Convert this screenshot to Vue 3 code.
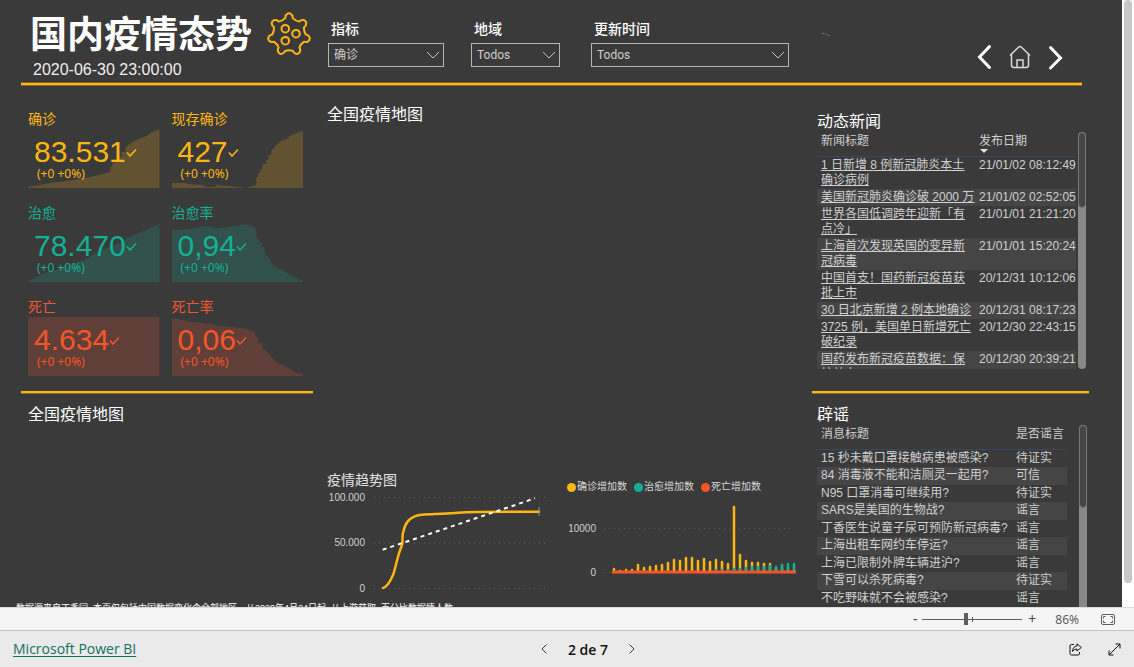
<script setup>
import { ref } from 'vue'

const filters = [
  { id: 'metric', label: '指标', value: '确诊' },
  { id: 'region', label: '地域', value: 'Todos' },
  { id: 'updated', label: '更新时间', value: 'Todos' },
]

const kpis = [
  { label: '确诊', value: '83.531', tone: 'gold', area: 'M0 59V58L12 56L22 54L38 52L50 50L62 48L74 45L82 43V38H84V34H87V31H90V28H93V23H97V19L102 14L108 11L116 8L124 3L131 0V59Z' },
  { label: '现存确诊', value: '427', tone: 'gold', area: 'M0 59V54L14 54L16 55L30 56L34 58L43 58L44 56L56 57L66 58L74 59L84 56V48H86V44H88V40H90V35H94V31H96V26H99V22L104 16L108 12L114 10L119 6L124 4L131 1V59Z' },
  { label: '治愈', value: '78.470', tone: 'teal', area: 'M0 59V58L8 54L14 51L30 46L44 41L58 36L66 31L76 26L90 21L98 15L108 11L118 7L124 4L131 1V59Z' },
  { label: '治愈率', value: '0,94', tone: 'teal', area: 'M0 59V7L18 6L24 5L36 3L44 5L56 4L64 3L74 1L82 4L84 7V16H87V20H90V24H92V29L97 35L99 40L105 45L112 48L118 52L124 55L131 58V59Z' },
  { label: '死亡', value: '4.634', tone: 'red', area: 'M0 59V0H131V59Z' },
  { label: '死亡率', value: '0,06', tone: 'red', area: 'M0 59V1L10 3L20 5L40 7L44 9L62 10L74 12L83 15V20H86V26H90V31L94 34L100 41L106 46L112 49L118 52L124 56L131 58V59Z' },
]

const news = [
  { lines: ['1 日新增 8 例新冠肺炎本土', '确诊病例'], date: '21/01/02 08:12:49' },
  { lines: ['美国新冠肺炎确诊破 2000 万'], date: '21/01/02 02:52:05' },
  { lines: ['世界各国低调跨年迎新「有', '点冷」'], date: '21/01/01 21:21:20' },
  { lines: ['上海首次发现英国的变异新', '冠病毒'], date: '21/01/01 15:20:24' },
  { lines: ['中国首支！国药新冠疫苗获', '批上市'], date: '20/12/31 10:12:06' },
  { lines: ['30 日北京新增 2 例本地确诊'], date: '20/12/31 08:17:23' },
  { lines: ['3725 例，美国单日新增死亡', '破纪录'], date: '20/12/30 22:43:15' },
  { lines: ['国药发布新冠疫苗数据：保', '护效力 79%'], date: '20/12/30 20:39:21' },
]

const rumors = [
  ['15 秒未戴口罩接触病患被感染?', '待证实'],
  ['84 消毒液不能和洁厕灵一起用?', '可信'],
  ['N95 口罩消毒可继续用?', '待证实'],
  ['SARS是美国的生物战?', '谣言'],
  ['丁香医生说童子尿可预防新冠病毒?', '谣言'],
  ['上海出租车网约车停运?', '谣言'],
  ['上海已限制外牌车辆进沪?', '谣言'],
  ['下雪可以杀死病毒?', '待证实'],
  ['不吃野味就不会被感染?', '谣言'],
]

const legend = [
  { name: '确诊增加数', tone: 'gold' },
  { name: '治愈增加数', tone: 'teal' },
  { name: '死亡增加数', tone: 'red' },
]

// Bar heights in chart units, one entry per day
const confirmed = [4, 2, 3, 3, 8, 5, 6, 7, 8, 10, 13, 12, 15, 15, 12, 14, 11, 13, 11, 9, 66, 18, 12, 10, 10, 9, 9, 5, 5, 4, 3]
const cured = [0, 0, 0, 0, 0, 0, 0, 0, 0, 0, 0, 0, 0, 0, 0, 0, 1, 3, 3, 3, 4, 4, 5, 6, 6, 6, 7, 6, 8, 9, 9]
const barX = (i) => 49 + i * 6

// Outline with seven rounded knobs around the centre
function virusOutline() {
  const at = (deg, r) => {
    const a = (deg * Math.PI) / 180
    return `${(22 + r * Math.cos(a)).toFixed(2)} ${(22.5 + r * Math.sin(a)).toFixed(2)}`
  }
  const step = 360 / 7
  const half = 12.5
  let d = `M${at(-90 - half, 16.8)}`
  for (let k = 0; k < 7; k++) {
    const a = -90 + k * step
    d += `A3.9 3.9 0 0 1 ${at(a - 7, 20.2)}`
    d += `A3.2 3.2 0 0 1 ${at(a + 7, 20.2)}`
    d += `A3.9 3.9 0 0 1 ${at(a + half, 16.8)}`
    d += `Q${at(a + step / 2, 15)} ${at(a + step - half, 16.8)}`
  }
  return d + 'Z'
}
const virusPath = virusOutline()
const zoom = ref(43)
</script>

<template>
  <div class="app">
    <div class="viewport">
      <main class="report">
        <header class="header">
          <div class="brand">
            <div>
              <h1>国内疫情态势</h1>
              <time>2020-06-30 23:00:00</time>
            </div>
            <svg class="virus" viewBox="0 0 44 45" aria-hidden="true">
              <path :d="virusPath" />
              <circle cx="18.3" cy="16.7" r="3.8" />
              <circle cx="29" cy="21.7" r="3.8" />
              <circle cx="18.3" cy="28.7" r="3.8" />
            </svg>
          </div>
          <div v-for="f in filters" :key="f.id" class="filter" :class="f.id">
            <label :for="f.id">{{ f.label }}</label>
            <div class="select">
              <select :id="f.id"><option>{{ f.value }}</option></select>
              <svg viewBox="0 0 14 8" aria-hidden="true"><path d="M1 1l6 6 6-6" /></svg>
            </div>
          </div>
          <svg class="specks" viewBox="0 0 10 6" aria-hidden="true">
            <path d="M1 1.500h2M4 2h2M6.500 3.500h2" />
          </svg>
          <nav class="page-nav">
            <button type="button" aria-label="上一页">
              <svg class="arrow" viewBox="0 0 14 24"><path d="M12.500 1.500L2.500 12l10 10.500" /></svg>
            </button>
            <button type="button" aria-label="主页">
              <svg class="home" viewBox="0 0 22 24">
                <path d="M1 10.500L9.500 2.200q1.500-1.400 3 0L21 10.500M2.500 9.500V20q0 2.500 2.500 2.500h12q2.500 0 2.500-2.500V9.500M8 22.500V15h6v7.500" />
              </svg>
            </button>
            <button type="button" aria-label="下一页">
              <svg class="arrow" viewBox="0 0 14 24"><path d="M1.500 2.500L11.500 13 1.500 23" /></svg>
            </button>
          </nav>
        </header>
        <div class="rule top"></div>

        <div class="body">
          <div class="overview">
            <div class="columns">
              <section class="left">
                <div class="kpis">
                  <article v-for="k in kpis" :key="k.label" class="kpi" :class="k.tone">
                    <h3>{{ k.label }}</h3>
                    <div class="card">
                      <svg class="area" viewBox="0 0 131 59" preserveAspectRatio="none" aria-hidden="true">
                        <path :d="k.area" />
                      </svg>
                      <div class="figures">
                        <div class="value">
                          {{ k.value }}<svg viewBox="0 0 11 9" aria-hidden="true"><path d="M1 4.500L4 8l6-6.500" /></svg>
                        </div>
                        <div class="delta">(+0 +0%)</div>
                      </div>
                    </div>
                  </article>
                </div>
                <div class="rule"></div>
                <h2 class="map-title">全国疫情地图</h2>
              </section>

              <section class="center">
                <h2>全国疫情地图</h2>
                <div class="map"></div>
                <div class="charts">
                  <figure>
                    <figcaption>疫情趋势图</figcaption>
                    <svg class="chart" viewBox="0 0 223 106">
                      <g class="grid"><path d="M47 6.500H221M47 52H221M47 97.500H221" /></g>
                      <g class="axis">
                        <text x="38" y="10">100.000</text>
                        <text x="38" y="55">50.000</text>
                        <text x="38" y="101">0</text>
                      </g>
                      <path class="curve" d="M56 97C60 96 63 91 66 84C69 76 70 66 75 54C76 50 75 45 76 42C77 37 79 32 82 29C86 25 90 24 95 23.700C108 23 118 23 128 22C138 21 140 21 150 21L212 20.700" />
                      <path class="marker" d="M212 16v9" />
                      <path class="dash" d="M55.700 58.700L208 7.300" />
                    </svg>
                  </figure>
                  <figure class="bars">
                    <ul class="legend">
                      <li v-for="l in legend" :key="l.name" :class="l.tone"><i></i>{{ l.name }}</li>
                    </ul>
                    <svg class="chart" viewBox="0 0 235 80">
                      <g class="grid"><path d="M39 28.500H228M39 72.500H228" /></g>
                      <g class="axis">
                        <text x="31" y="32">10000</text>
                        <text x="31" y="76">0</text>
                      </g>
                      <g class="bar gold">
                        <path v-for="(h, i) in confirmed" :key="i" :d="`M${barX(i)} 72V${72 - h + 1}`" />
                      </g>
                      <g class="bar teal">
                        <path v-for="(h, i) in cured.slice(16)" :key="i" :d="`M${barX(i + 16)} 72V${72 - h + 1}`" />
                      </g>
                      <path class="baseline" d="M47 72H231" />
                    </svg>
                  </figure>
                </div>
              </section>
            </div>
            <p class="note">数据源来自丁香园, 本页仅包括中国数据变化含全部地区。从2020年4月24日起, 从上游获取, 百分比数据情人数</p>
          </div>

          <aside class="side">
            <section class="news">
              <h2>动态新闻</h2>
              <div class="scroller">
                <table>
                  <thead>
                    <tr><th>新闻标题</th><th class="date sorted">发布日期</th></tr>
                  </thead>
                  <tbody>
                    <tr v-for="n in news" :key="n.date">
                      <td><a href="#"><span v-for="t in n.lines" :key="t">{{ t }}</span></a></td>
                      <td class="date">{{ n.date }}</td>
                    </tr>
                  </tbody>
                </table>
                <div class="bar-track"><div class="bar-thumb"></div></div>
              </div>
            </section>
            <div class="rule"></div>
            <section class="rumors">
              <h2>辟谣</h2>
              <div class="scroller">
                <table>
                  <thead>
                    <tr><th>消息标题</th><th class="verdict">是否谣言</th></tr>
                  </thead>
                  <tbody>
                    <tr v-for="r in rumors" :key="r[0]">
                      <td>{{ r[0] }}</td>
                      <td>{{ r[1] }}</td>
                    </tr>
                  </tbody>
                </table>
                <div class="bar-track"><div class="bar-thumb"></div></div>
              </div>
            </section>
          </aside>
        </div>
      </main>
      <div class="page-scroll"><div></div></div>
    </div>

    <div class="zoom-bar">
      <button type="button" class="step" aria-label="Reducir">-</button>
      <input v-model="zoom" type="range" min="0" max="100" aria-label="Zoom" />
      <button type="button" class="step" aria-label="Ampliar">+</button>
      <span class="percent">86%</span>
      <button type="button" class="fit" aria-label="Ajustar a la página">
        <svg viewBox="0 0 14 11">
          <rect x="0.500" y="0.500" width="13" height="10" rx="1.500" />
          <path d="M2.500 4.500v-2h2M9.500 2.500h2v2M11.500 6.500v2h-2M4.500 8.500h-2v-2" />
        </svg>
      </button>
    </div>

    <footer class="footer">
      <a href="#">Microsoft Power BI</a>
      <div class="pager">
        <button type="button" aria-label="Página anterior"><svg viewBox="0 0 6 10"><path d="M5.500 0.500L1 5l4.500 4.500" /></svg></button>
        <span>2 de 7</span>
        <button type="button" aria-label="Página siguiente"><svg viewBox="0 0 6 10"><path d="M0.500 0.500L5 5 0.500 9.500" /></svg></button>
      </div>
      <div class="actions">
        <button type="button" aria-label="Compartir">
          <svg viewBox="0 0 13 13">
            <path d="M5 1.500H2.500Q1 1.500 1 3v7.500Q1 12 2.500 12H9q1.500 0 1.500-1.500V9" />
            <path d="M8 0.800L12.300 4.500 8 8V6Q5 6 3.500 8.500 3.700 3.500 8 3Z" />
          </svg>
        </button>
        <button type="button" aria-label="Pantalla completa">
          <svg viewBox="0 0 13 13"><path d="M1 12L12 1M7.500 1H12v4.500M1 7.500V12h4.500" /></svg>
        </button>
      </div>
    </footer>
  </div>
</template>

<style>
body {
  margin: 0;
}
</style>

<style scoped>
.app {
  --gold: #fdb714;
  --teal: #12b095;
  --red: #f5562b;
  display: flex;
  flex-direction: column;
  height: 100vh;
  overflow: hidden;
  font-family: "Liberation Sans", "Noto Sans CJK SC", sans-serif;
  color: #fff;
}
h1, h2, h3, p, figure, ul {
  margin: 0;
  padding: 0;
  font-weight: 400;
}
button {
  padding: 0;
  border: 0;
  background: none;
  font: inherit;
  color: inherit;
}
svg {
  display: block;
  fill: none;
}
.viewport {
  display: flex;
  flex: 1;
  min-height: 0;
  overflow: hidden;
}
.report {
  flex: 1;
  min-width: 0;
  padding: 0 33px 0 16px;
  background: #3a3a3a;
}
.page-scroll {
  width: 8px;
  padding: 0 2px;
  background: #fff;
}
.page-scroll div {
  height: 96%;
  border-radius: 4px;
  background: #c7c7c7;
}

.header {
  display: flex;
  height: 82px;
  margin: 0 7px 0 5px;
}
.brand {
  display: flex;
  gap: 15px;
  width: 307px;
  padding-left: 9px;
  box-sizing: border-box;
}
h1 {
  margin-top: 12px;
  font-size: 37px;
  font-weight: 700;
  line-height: 48px;
  white-space: nowrap;
}
time {
  display: block;
  padding-left: 3px;
  font-size: 16px;
  line-height: 20px;
  color: #eee;
}
.virus {
  width: 44px;
  height: 45px;
  margin-top: 12px;
  stroke: var(--gold);
  stroke-width: 2;
  stroke-linejoin: round;
}
.filter {
  padding-top: 19px;
}
.filter label {
  display: block;
  margin-bottom: 4px;
  padding-left: 3px;
  font-size: 14px;
  font-weight: 500;
  line-height: 20px;
}
.metric {
  width: 116px;
  margin-right: 27px;
}
.region {
  width: 89px;
  margin-right: 31px;
}
.updated {
  width: 198px;
}
.select {
  display: grid;
  align-items: center;
}
.select > * {
  grid-area: 1 / 1;
}
.select select {
  appearance: none;
  width: 100%;
  height: 24px;
  padding: 0 5px;
  border: 1px solid #b4b4b4;
  border-radius: 0;
  background: transparent;
  font-family: Roboto, "Noto Sans CJK SC", sans-serif;
  font-size: 12px;
  color: #d0cecc;
}
.select svg {
  justify-self: end;
  width: 14px;
  height: 8px;
  margin-right: 4px;
  stroke: #c8c8c8;
  pointer-events: none;
}
.specks {
  width: 10px;
  height: 6px;
  margin: 32px 0 0 32px;
  stroke: #777;
}
.page-nav {
  display: flex;
  align-items: flex-start;
  gap: 18px;
  margin-left: auto;
  padding: 45px 19px 0 0;
}
.arrow {
  width: 14px;
  height: 24px;
  overflow: visible;
  stroke: #fff;
  stroke-width: 3;
  stroke-linecap: round;
}
.home {
  width: 22px;
  height: 24px;
  stroke: #d8d8d8;
  stroke-width: 1.5;
}
.rule {
  height: 2px;
  border-bottom: 1px solid #8d6d22;
  background: var(--gold);
}
.rule.top {
  margin: 0 7px 0 5px;
  border-top: 1px solid #7d6424;
}

.body {
  display: grid;
  grid-template-columns: minmax(0, 796fr) minmax(0, 277fr);
}
.columns {
  display: grid;
  grid-template-columns: minmax(0, 292fr) minmax(0, 499fr);
  padding-left: 5px;
}
h2 {
  font-size: 16px;
  line-height: 20px;
}
.kpis {
  display: grid;
  grid-template-columns: 1fr 1fr;
  gap: 16px 12px;
  padding: 24px 10px 15px 7px;
}
.kpi h3 {
  font-size: 14px;
  line-height: 19px;
}
.gold { color: var(--gold); }
.teal { color: var(--teal); }
.red { color: var(--red); }
.card {
  display: grid;
}
.card > * {
  grid-area: 1 / 1;
}
.area {
  width: 100%;
  height: 59px;
}
.area path {
  fill: currentColor;
  fill-opacity: 0.2;
}
.figures {
  padding: 8px 0 0 6px;
}
.value {
  display: flex;
  align-items: center;
  font-size: 30px;
  line-height: 30px;
}
.value svg {
  width: 11px;
  height: 9px;
  stroke: currentColor;
  stroke-width: 1.5;
}
.delta {
  padding-left: 3px;
  font-family: "Noto Sans", sans-serif;
  font-size: 12px;
  line-height: 14px;
}
.map-title {
  margin: 11px 0 0 7px;
}
.center {
  padding: 19px 12px 0 14px;
}
.map {
  height: 345px;
}
.charts {
  display: grid;
  grid-template-columns: minmax(0, 223fr) minmax(0, 235fr);
  gap: 15px;
}
figcaption {
  margin-bottom: 1px;
  font-size: 14px;
  line-height: 20px;
  color: #e4e4e4;
}
.chart {
  width: 100%;
}
.grid path {
  stroke: #606060;
  stroke-dasharray: 1 4;
}
.axis text {
  fill: #d0d0d0;
  font-size: 10px;
  text-anchor: end;
}
.curve {
  stroke: var(--gold);
  stroke-width: 2.5;
  stroke-linecap: round;
}
.marker {
  stroke: #909090;
}
.dash {
  stroke: #fff;
  stroke-width: 2;
  stroke-dasharray: 4 4;
}
.bars {
  padding-top: 9px;
}
.legend {
  display: flex;
  gap: 7px;
  margin: 0 0 5px 2px;
  list-style: none;
}
.legend li {
  display: flex;
  align-items: center;
  gap: 1px;
  font-size: 10px;
  line-height: 16px;
  white-space: nowrap;
  color: #d8d8d8;
}
.legend li i {
  width: 9px;
  height: 9px;
  border-radius: 50%;
  background: currentColor;
}
.legend .gold i { background: var(--gold); }
.legend .teal i { background: var(--teal); }
.legend .red i { background: var(--red); }
.bar path {
  stroke: currentColor;
  stroke-width: 2.5;
  stroke-linecap: round;
}
.baseline {
  stroke: var(--red);
  stroke-width: 3;
}
.note {
  margin-top: 3px;
  font-size: 9px;
  line-height: 16px;
  white-space: nowrap;
}

.news {
  padding: 26px 3px 22px 5px;
}
.scroller {
  display: flex;
}
table {
  flex: 1;
  align-self: flex-start;
  border-collapse: collapse;
  font-size: 12px;
  line-height: 15px;
  color: #d0d0d0;
}
th, td {
  padding: 1px 0 1px 4px;
  text-align: left;
  vertical-align: top;
  font-weight: 400;
  white-space: nowrap;
}
thead tr {
  border-bottom: 1px solid #34495e;
}
tbody tr:nth-child(even) {
  background: #454545;
}
td a {
  color: inherit;
}
td a span {
  display: block;
  text-decoration: underline;
}
.news .scroller {
  gap: 2px;
  height: 237px;
  overflow: hidden;
}
.news table {
  table-layout: fixed;
  width: 100%;
}
th {
  height: 21px;
  padding-top: 2px;
}
.news .date {
  width: 97px;
  padding-left: 2px;
}
.sorted::after {
  content: "";
  display: block;
  width: 0;
  margin-left: 1px;
  border: 4px solid transparent;
  border-top-color: #e0e0e0;
  border-bottom: 0;
}
.bar-track {
  flex: none;
  width: 8px;
  border-radius: 4px;
  background: #888;
}
.bar-thumb {
  box-sizing: border-box;
  height: 76px;
  border: 1px solid #777;
  border-radius: 4px;
  background: #454545;
}
.rumors {
  padding: 11px 2px 0 5px;
}
.rumors .scroller {
  gap: 12px;
  height: 190px;
  overflow: hidden;
}
.rumors tbody tr:nth-child(even) td {
  padding-bottom: 2px;
}
.verdict {
  width: 51px;
}
.rumors .bar-thumb {
  height: 83px;
}

.zoom-bar {
  display: flex;
  align-items: center;
  justify-content: flex-end;
  box-sizing: border-box;
  height: 24px;
  padding-right: 19px;
  border-top: 1px solid #dcdcdc;
  border-bottom: 1px solid #c4c4c4;
  background: #f5f5f5;
  font-family: "Noto Sans", sans-serif;
  font-size: 12px;
  color: #605e5c;
}
.step {
  width: 14px;
  font-size: 14px;
  line-height: 20px;
  color: #444;
}
.zoom-bar input {
  appearance: none;
  width: 100px;
  height: 12px;
  margin: 0 3px 0 0;
  background:
    linear-gradient(#605e5c, #605e5c) 50px 4px / 1px 5px no-repeat,
    linear-gradient(#605e5c, #605e5c) 0 6px / 100% 1px no-repeat;
}
.zoom-bar input::-webkit-slider-thumb {
  appearance: none;
  width: 4px;
  height: 12px;
  background: #605e5c;
}
.percent {
  margin: 0 22px 0 16px;
}
.fit svg {
  width: 14px;
  height: 11px;
  stroke: #605e5c;
}

.footer {
  display: grid;
  grid-template-columns: 1fr auto 1fr;
  align-items: center;
  height: 36px;
  padding: 0 13px;
  background: #eaeaea;
  font-family: "Open Sans", "Noto Sans", sans-serif;
  font-size: 14px;
  color: #111;
}
.footer a {
  justify-self: start;
  color: #12705f;
  line-height: 20px;
  text-underline-offset: 2px;
}
.pager {
  display: flex;
  align-items: center;
  gap: 21px;
  margin-left: 42px;
}
.pager span {
  font-size: 14px;
  font-weight: 600;
}
.pager button svg {
  width: 6px;
  height: 10px;
  stroke: #333;
}
.actions {
  display: flex;
  justify-self: end;
  gap: 26px;
}
.actions svg {
  width: 13px;
  height: 13px;
  stroke: #111;
}
</style>
